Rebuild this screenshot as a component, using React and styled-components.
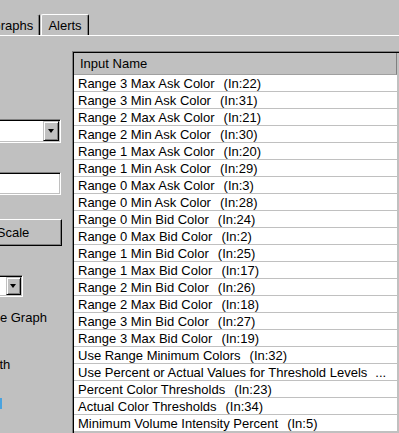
import React from "react";
import styled, { createGlobalStyle } from "styled-components";

const Global = createGlobalStyle`
  html, body { margin: 0; padding: 0; background: #c0c0c0; }
  body { font-family: "Liberation Sans", Arial, sans-serif; font-size: 13px; color: #000; }
`;

const Window = styled.div`
  width: 399px;
  height: 433px;
  overflow: hidden;
  display: flex;
  flex-direction: column;
  background: #c0c0c0;
`;

const TabStrip = styled.div`
  height: 35px;
  border-bottom: 1px solid #ffffff;
  display: flex;
  align-items: flex-end;
  overflow: hidden;
  flex: none;
`;

const Tab = styled.div`
  box-sizing: border-box;
  height: 21px;
  width: ${(p) => p.$w}px;
  margin-left: ${(p) => p.$ml}px;
  border-top: 1px solid ${(p) => (p.$noTop ? "transparent" : "#ffffff")};
  border-left: 1px solid #ffffff;
  border-right: 1px solid #000000;
  box-shadow: inset -1px 0 0 #808080;
  border-radius: 2px 2px 0 0;
  display: flex;
  align-items: center;
  justify-content: center;
  line-height: 15px;
  padding-top: 1px;
  flex: none;
`;

const Body = styled.div`
  flex: 1;
  display: flex;
  min-height: 0;
`;

const LeftPanel = styled.div`
  width: 72px;
  flex: none;
  overflow: hidden;
  display: flex;
  flex-direction: column;
  align-items: flex-start;
`;

const Sunken = styled.div`
  box-sizing: border-box;
  flex: none;
  width: ${(p) => p.$w}px;
  height: ${(p) => p.$h}px;
  margin-left: ${(p) => p.$ml}px;
  margin-top: ${(p) => p.$mt}px;
  background: #ffffff;
  border-top: 1px solid #808080;
  border-left: 1px solid #808080;
  border-right: 1px solid #ffffff;
  border-bottom: 1px solid #ffffff;
  box-shadow: inset 1px 1px 0 #000000, inset -1px -1px 0 #c0c0c0;
  display: flex;
  justify-content: flex-end;
  padding: 1px;
`;

const DropButton = styled.div`
  box-sizing: border-box;
  width: ${(p) => p.$w}px;
  height: 100%;
  background: #c0c0c0;
  border-top: 1px solid #c0c0c0;
  border-left: 1px solid #c0c0c0;
  border-right: 1px solid #000000;
  border-bottom: 1px solid #000000;
  box-shadow: inset 1px 1px 0 #ffffff, inset -1px -1px 0 #808080;
  display: flex;
  align-items: center;
  justify-content: center;
`;

const Arrow = styled.div`
  width: 0;
  height: 0;
  border-left: 3.5px solid transparent;
  border-right: 3.5px solid transparent;
  border-top: 4px solid #000;
  margin-left: -1px;
`;

const PushButton = styled.div`
  box-sizing: border-box;
  flex: none;
  width: ${(p) => p.$w}px;
  height: ${(p) => p.$h}px;
  margin-left: ${(p) => p.$ml}px;
  margin-top: ${(p) => p.$mt}px;
  background: #c0c0c0;
  border-top: 1px solid #ffffff;
  border-left: 1px solid #ffffff;
  border-right: 1px solid #000000;
  border-bottom: 1px solid #000000;
  box-shadow: inset -1px -1px 0 #808080;
  display: flex;
  align-items: center;
  justify-content: center;
  font-size: 13px;
`;

const Label = styled.div`
  flex: none;
  white-space: nowrap;
  line-height: 16px;
  margin-left: ${(p) => p.$ml}px;
  margin-top: ${(p) => p.$mt}px;
`;

const LinkMark = styled.div`
  flex: none;
  width: 2px;
  height: 11px;
  margin-top: ${(p) => p.$mt}px;
  background: #4aa3df;
`;

const Grid = styled.div`
  flex: 1;
  margin-top: 15px;
  border-top: 1px solid #808080;
  border-left: 1px solid #808080;
  box-shadow: inset 1px 1px 0 #000000;
  padding: 1px 0 0 1px;
  display: flex;
  flex-direction: column;
  overflow: hidden;
`;

const Column = styled.div`
  width: 323px;
  display: flex;
  flex-direction: column;
`;

const Header = styled.div`
  box-sizing: border-box;
  height: 22px;
  padding-left: 6px;
  border-bottom: 1px solid #a0a0a0;
  border-right: 1px solid #808080;
  background: #c0c0c0;
  display: flex;
  align-items: center;
  white-space: nowrap;
`;

const Row = styled.div`
  box-sizing: border-box;
  height: 17px;
  padding-left: 4px;
  background: #ffffff;
  border-bottom: 1px solid #c0c0c0;
  display: flex;
  align-items: center;
  white-space: nowrap;
  overflow: hidden;
`;

const Suffix = styled.span`
  padding-left: ${(p) => p.$gap}px;
`;

const rows = [
  ["Range 3 Max Ask Color", "(In:22)"],
  ["Range 3 Min Ask Color", "(In:31)"],
  ["Range 2 Max Ask Color", "(In:21)"],
  ["Range 2 Min Ask Color", "(In:30)"],
  ["Range 1 Max Ask Color", "(In:20)"],
  ["Range 1 Min Ask Color", "(In:29)"],
  ["Range 0 Max Ask Color", "(In:3)"],
  ["Range 0 Min Ask Color", "(In:28)"],
  ["Range 0 Min Bid Color", "(In:24)"],
  ["Range 0 Max Bid Color", "(In:2)"],
  ["Range 1 Min Bid Color", "(In:25)"],
  ["Range 1 Max Bid Color", "(In:17)"],
  ["Range 2 Min Bid Color", "(In:26)"],
  ["Range 2 Max Bid Color", "(In:18)"],
  ["Range 3 Min Bid Color", "(In:27)"],
  ["Range 3 Max Bid Color", "(In:19)"],
  ["Use Range Minimum Colors", "(In:32)"],
  ["Use Percent or Actual Values for Threshold Levels", "...", 8],
  ["Percent Color Thresholds", "(In:23)"],
  ["Actual Color Thresholds", "(In:34)"],
  ["Minimum Volume Intensity Percent", "(In:5)"],
];

export default function App() {
  return (
    <>
      <Global />
      <Window>
        <TabStrip>
          <Tab $w={56} $ml={-16} $noTop>Graphs</Tab>
          <Tab $w={48} $ml={1}>Alerts</Tab>
        </TabStrip>
        <Body>
          <LeftPanel>
            <Sunken $w={160} $h={24} $ml={-99} $mt={83}>
              <DropButton $w={16}><Arrow /></DropButton>
            </Sunken>
            <Sunken $w={160} $h={23} $ml={-99} $mt={29} />
            <PushButton $w={98} $h={27} $ml={-36} $mt={24}>Scale</PushButton>
            <Sunken $w={80} $h={22} $ml={-57} $mt={29}>
              <DropButton $w={15}><Arrow /></DropButton>
            </Sunken>
            <Label $ml={-16} $mt={13}>Use Graph</Label>
            <Label $ml={-23} $mt={31}>Width</Label>
            <LinkMark $mt={25} />
          </LeftPanel>
          <Grid>
            <Column>
              <Header>Input Name</Header>
              {rows.map(([name, suffix, gap]) => (
                <Row key={name}>
                  {name}
                  <Suffix $gap={gap ?? 9}>{suffix}</Suffix>
                </Row>
              ))}
            </Column>
          </Grid>
        </Body>
      </Window>
    </>
  );
}
